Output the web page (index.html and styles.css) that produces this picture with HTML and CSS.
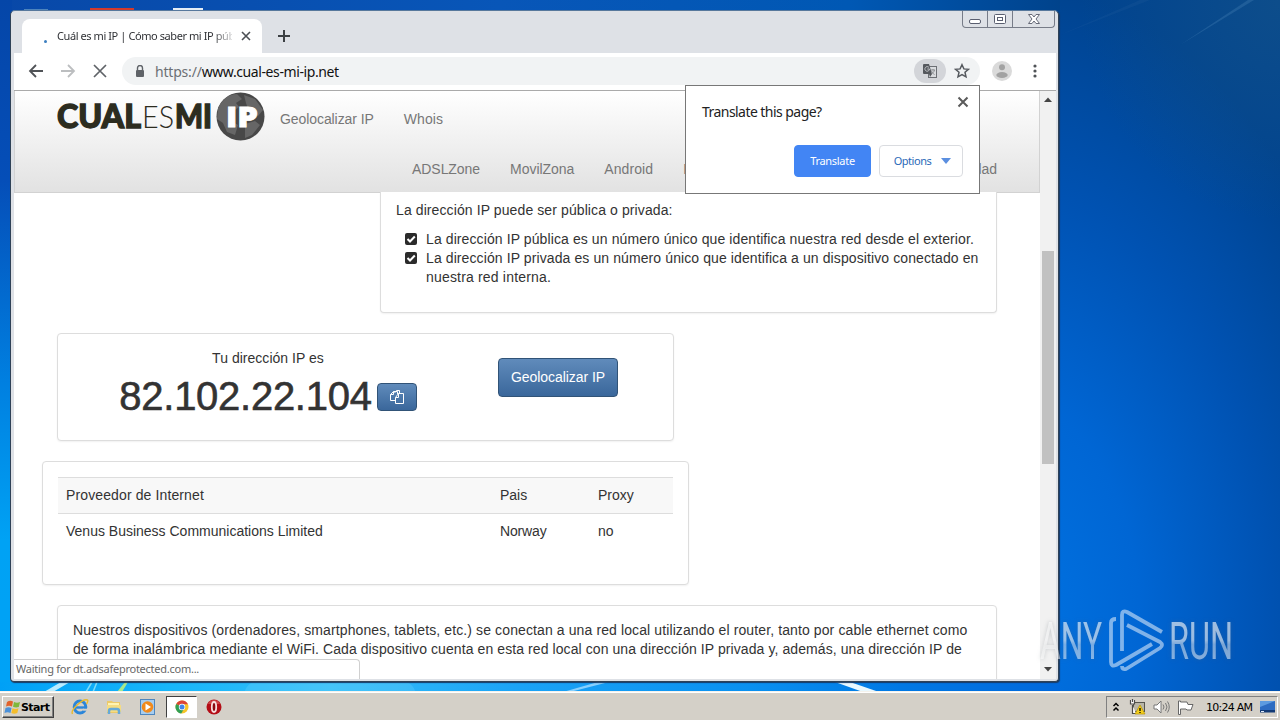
FILE: index.html
```html
<!DOCTYPE html>
<html lang="es">
<head>
<meta charset="utf-8">
<title>Cuál es mi IP</title>
<link rel="stylesheet" href="styles.css">
</head>
<body>
<div class="desktop">
  <svg class="wallpaper" width="1280" height="692" viewBox="0 0 1280 692">
    <rect x="24" y="9" width="24" height="1" fill="#4d84bd"/><rect x="90" y="8" width="44" height="3" fill="#d23a2c"/><rect x="173" y="8" width="30" height="3" fill="#e4edf5"/>
    <path d="M44 692 61 682h9L53 692z" fill="#b9ecff"/>
    <path d="M86 692l6-10M93 692l4-10" stroke="#7edcf8" stroke-width="1.5"/>
    <path d="M117 692l8-10h3l-6 10z" fill="#a8e88b"/>
    <ellipse cx="330" cy="692" rx="85" ry="24" fill="#8ee0ff" opacity=".2"/>
    <path d="M563 692 598 682h11L570 692z" fill="#a5dcff" opacity=".8"/>
    <path d="M835 682h15l29 10h-16z" fill="#e8f8ff"/>
    <path d="M1180 45 1248 0h6z" fill="#5c93c5" opacity=".25"/>
    <path d="M1060 35 1140 0h10z" fill="#4c83b5" opacity=".1"/>
  </svg>

  <div class="window">
    <div class="captions">
      <span class="cap"><svg width="25" height="16"><rect x="6.5" y="8.5" width="11" height="4" rx="1.5" fill="#fff" stroke="#5a5f70"/></svg></span>
      <span class="cap"><svg width="25" height="16"><rect x="6.500" y="3.500" width="11" height="9" rx="1" fill="#fff" stroke="#5a5f70"/><rect x="9.500" y="6.500" width="5" height="3" fill="#fff" stroke="#5a5f70"/></svg></span>
      <span class="cap wide"><svg width="41" height="16"><path d="M15.500 3.500h3.500l2 2.500 2-2.500h3.500l-3.500 4.500 3.500 4.500h-3.500l-2-2.500-2 2.500h-3.500l3.500-4.500z" fill="#fff" stroke="#666a78"/></svg></span>
    </div>
    <div class="tabstrip">
      <div class="tab">
        <i class="spinner"></i>
        <span class="tabtitle">Cuál es mi IP | Cómo saber mi IP púb</span>
        <svg width="10" height="10" viewBox="0 0 10 10"><path d="M1 1l8 8M9 1l-8 8" stroke="#4b4f54" stroke-width="1.6"/></svg>
      </div>
      <svg class="newtab" width="12" height="12"><path d="M6 0v12M0 6h12" stroke="#3c4043" stroke-width="2"/></svg>
    </div>
    <div class="toolbar">
      <svg class="nav1" width="16" height="16"><path d="M15 8H2M8 2 2 8l6 6" fill="none" stroke="#505357" stroke-width="1.8"/></svg>
      <svg class="nav2" width="16" height="16"><path d="M1 8h13M8 2l6 6-6 6" fill="none" stroke="#bcbec0" stroke-width="1.8"/></svg>
      <svg class="nav3" width="14" height="14"><path d="M1 1l12 12M13 1 1 13" stroke="#5f6368" stroke-width="1.7"/></svg>
      <div class="omnibox">
        <svg class="lock" width="10" height="13"><path d="M2.500 5V3a2.500 2.500 0 0 1 5 0v2" fill="none" stroke="#5f6368" stroke-width="1.400"/><rect x="1" y="5" width="8" height="7" rx="1" fill="#5f6368"/></svg>
        <span class="url"><span class="scheme">https://</span>www.cual-es-mi-ip.net</span>
        <span class="trbadge"><svg width="16" height="16" viewBox="0 0 16 16"><rect x="6.500" y="3.500" width="8" height="11" fill="#d9dbde" stroke="#6c6f74"/><path d="M1 2a1 1 0 0 1 1-1h5l3 10H2a1 1 0 0 1-1-1z" fill="#55585d"/><path d="M7 4.500A2.300 2.300 0 1 0 7.500 6H5.300" fill="none" stroke="#c1c4c8"/><path d="M9 7h4M11 6v1M12.500 7c-.4 2-1.600 3-3 4M9.500 8c.6 1.500 1.500 2.500 3 3.500" fill="none" stroke="#8b8e92"/><path d="M7 11h3l-2 3z" fill="#55585d"/></svg></span>
        <svg class="star" width="16" height="16" viewBox="0 0 16 16"><path d="M8 1.700l1.900 4.200 4.500.4-3.400 3 1 4.500L8 11.500l-4 2.300 1-4.500-3.400-3 4.500-.4z" fill="none" stroke="#55595e" stroke-width="1.500"/></svg>
      </div>
      <svg class="avatar" width="20" height="20"><circle cx="10" cy="10" r="10" fill="#dadada"/><circle cx="10" cy="6.200" r="3" fill="#a2a2a2"/><ellipse cx="10" cy="14" rx="5.700" ry="3" fill="#a2a2a2"/></svg>
      <svg class="dots" width="4" height="14"><g fill="#505357"><circle cx="2" cy="2" r="1.600"/><circle cx="2" cy="7" r="1.600"/><circle cx="2" cy="12" r="1.600"/></g></svg>
    </div>

    <div class="view">
      <div class="page">
        <div class="navbar">
          <div class="navrow">
            <svg class="logo" width="210" height="50" viewBox="0 0 210 50">
              <g font-family="Lato" font-size="31.500" fill="#2c2c1f">
                <text class="heavy" x="0" y="36" textLength="84" lengthAdjust="spacingAndGlyphs">CUAL</text>
                <text x="85" y="36" font-weight="300" textLength="32" lengthAdjust="spacingAndGlyphs">ES</text>
                <text class="heavy" x="118" y="36" textLength="37" lengthAdjust="spacingAndGlyphs">MI</text>
              </g>
              <circle cx="183.500" cy="24.500" r="24" fill="#484848"/>
              <path d="M161 16q7-14 19-14l5 5-6 4 3 4-7 5-2 8 8 5-3 10-8-3-4-9-6-4zM187 3l11 4 8 11-5 6-9-4-3-9zM188 32l10-3 5 4-8 10-7 3z" fill="#666"/>
              <text class="iptext" x="169" y="35" textLength="32" lengthAdjust="spacingAndGlyphs">IP</text>
            </svg>
            <span class="geo">Geolocalizar IP</span><span class="whois">Whois</span>
          </div>
          <div class="navlinks"><span class="l1">ADSLZone</span><span class="l2">MovilZona</span><span class="l3">Android</span><span class="l4">Redes</span><span class="last">Movilidad</span></div>
        </div>
        <div class="main">
          <section class="card info">
            <p class="t0">La dirección IP puede ser pública o privada:</p>
            <ul>
              <li><svg width="12" height="12"><rect width="12" height="12" rx="2" fill="#2b2b2b"/><path d="M2.500 6 5 8.500 9.800 3.500" fill="none" stroke="#fff" stroke-width="2"/></svg><span>La dirección IP pública es un número único que identifica nuestra red desde el exterior.</span></li>
              <li><svg width="12" height="12"><rect width="12" height="12" rx="2" fill="#2b2b2b"/><path d="M2.500 6 5 8.500 9.800 3.500" fill="none" stroke="#fff" stroke-width="2"/></svg><span>La dirección IP privada es un número único que identifica a un dispositivo conectado en<br><span class="t3">nuestra red interna.</span></span></li>
            </ul>
          </section>
          <section class="card ipcard">
            <div class="ipcol">
              <p class="t4">Tu dirección IP es</p>
              <div class="iprow"><span class="ip">82.102.22.104</span><span class="btn copy"><svg width="16" height="16" viewBox="0 0 16 16"><path d="M6.500 11.500h-5v-6l3-3h4v2.500M4.500 2.500v3h-3M10.500 4V1.500h-3L5.500 4" fill="none" stroke="#fff"/><path d="M6.500 14.500v-6l3-4h5v10zM9.500 4.500v4h-3" fill="none" stroke="#fff"/></svg></span></div>
            </div>
            <span class="btn geobtn">Geolocalizar IP</span>
          </section>
          <section class="card provider">
            <div class="row head"><span class="h0">Proveedor de Internet</span><span>Pais</span><span>Proxy</span></div>
            <div class="row"><span>Venus Business Communications Limited</span><span class="t6">Norway</span><span>no</span></div>
          </section>
          <section class="card more"><span class="t7">Nuestros dispositivos (ordenadores, smartphones, tablets, etc.) se conectan a una red local utilizando el router, tanto por cable ethernet como</span><br><span class="t8">de forma inalámbrica mediante el WiFi. Cada dispositivo cuenta en esta red local con una dirección IP privada y, además, una dirección IP de</span></section>
        </div>
      </div>
      <div class="scrollbar">
        <svg width="16" height="17"><path d="M4 11h8L8 6.500z" fill="#444"/></svg>
        <i class="thumb"></i>
        <svg width="16" height="17"><path d="M4 5h8l-4 4.500z" fill="#444"/></svg>
      </div>
      <div class="status">Waiting for dt.adsafeprotected.com...</div>
    </div>

    <div class="popup">
      <div class="ptop"><span class="ptitle">Translate this page?</span><svg width="12" height="12"><path d="M1.500 1.500l9 9M10.500 1.500l-9 9" stroke="#5a5a5a" stroke-width="2"/></svg></div>
      <div class="pbtns"><span class="pb blue">Translate</span><span class="pb">Options<svg width="10" height="6"><path d="M0 0h10L5 6z" fill="#5b8fe0"/></svg></span></div>
    </div>
  </div>

  <svg class="watermark" width="230" height="70" viewBox="0 0 230 70">
    <defs>
      <linearGradient id="wg" x1="0" y1="0" x2="0" y2="1"><stop offset="0" stop-color="#fff" stop-opacity=".62"/><stop offset=".48" stop-color="#fff" stop-opacity=".58"/><stop offset=".55" stop-color="#fff" stop-opacity=".45"/><stop offset="1" stop-color="#fff" stop-opacity=".55"/></linearGradient>
    </defs>
    <g class="wmtext" font-size="51" fill="url(#wg)">
      <text x="4" y="53" textLength="62" lengthAdjust="spacingAndGlyphs">ANY</text>
      <text x="133" y="53" textLength="64" lengthAdjust="spacingAndGlyphs">RUN</text>
    </g>
    <path d="M80 13q-5 0-5 4v39q0 5 5 3l36-21M86 45V9q0-5 5-3l35 20M91 19l33 17q4 3 0 6L90 63q-4 1-4-3" fill="none" stroke="#fff" stroke-opacity=".5" stroke-width="3.800" stroke-linejoin="round"/>
  </svg>

  <div class="taskbar">
    <div class="start"><svg width="17" height="16" viewBox="0 0 17 16"><path d="M3 3q3-2 6-.5L8 7.500Q5 6 2 7.500z" fill="#e2622b"/><path d="M10 3q3 1.500 6 0l-1.200 5Q12 9 9 7.800z" fill="#7fb83c"/><path d="M1.500 9q3-1.500 6 0L6.500 14q-3-1.500-6 0z" fill="#4b91d9"/><path d="M8.500 9.300q3 1.500 6 0l-1.200 4.700q-3 1.500-6 0z" fill="#f4bd2c"/></svg>Start</div>
    <svg class="ql" width="18" height="18" viewBox="0 0 18 18"><ellipse cx="9" cy="9" rx="5.800" ry="6" fill="none" stroke="#2b86d9" stroke-width="3"/><path d="M4 9.500h11" stroke="#2b86d9" stroke-width="2.400"/><path d="M12 11.700h5" stroke="#d4d0c8" stroke-width="2"/><path d="M1.500 16C-1 12 12 0 16.500 2q1 1-1 4" fill="none" stroke="#e9b92d" stroke-width="1.400"/></svg>
    <svg class="ql" width="18" height="18" viewBox="0 0 18 18"><path d="M2 3h5l1 1h7v11H2z" fill="#ecc969"/><path d="M3 5h11v4H3z" fill="#fff3b2"/><path d="M2 7h14v7H2z" fill="#f5dc82"/><path d="M4 16v-3q0-2 2-2h6q2 0 2 2v3" fill="none" stroke="#66a9d8" stroke-width="2.500"/></svg>
    <svg class="ql" width="18" height="18" viewBox="0 0 18 18"><rect x="1.500" y="1.500" width="14" height="15" fill="#a6cdf0" stroke="#4e86be"/><circle cx="8.500" cy="9" r="5.800" fill="#f18a1c"/><path d="M6.500 5.500v7l5.500-3.500z" fill="#fff"/></svg>
    <div class="active"><svg width="14" height="14" viewBox="0 0 14 14"><circle cx="7" cy="7" r="6.500" fill="#f6c529"/><path d="M7 7 1.200 4A6.600 6.600 0 0 1 13 4.200H7z" fill="#dc4437"/><path d="M7 7 1.200 4a6.500 6.500 0 0 0 5 9.500l3-5z" fill="#319f55"/><circle cx="7" cy="7" r="3.200" fill="#fff"/><circle cx="7" cy="7" r="2.500" fill="#4285e8"/></svg></div>
    <svg class="opera" width="16" height="16" viewBox="0 0 16 16"><circle cx="8" cy="8" r="7.500" fill="#b40d16"/><path d="M2 5a6.500 6.500 0 0 1 12 0z" fill="#e06565" opacity=".6"/><ellipse cx="8" cy="8" rx="2.200" ry="5" fill="#8a0a10" stroke="#f6dede" stroke-width="1.800"/></svg>
    <div class="tray">
      <svg width="8" height="12"><path d="M1.500 5 4 2.500 6.500 5M1.500 9.500 4 7l2.500 2.500" fill="none" stroke="#000" stroke-width="1.500"/></svg>
      <svg class="net" width="17" height="16"><rect x="4.500" y="3.500" width="11" height="9" fill="#b9b6a8" stroke="#55554f"/><path d="M1.500 1v4h4V1M3.500 0v3M3.500 6v8.500H7" fill="#fff" stroke="#4b4b4b" stroke-width="1.200"/><path d="M11 6l5 9H6z" fill="#f4ce1c" stroke="#b79400" stroke-width=".7"/><path d="M11 9v3M11 13v1" stroke="#000" stroke-width="1.300"/></svg>
      <svg class="vol" width="17" height="14"><path d="M1 5h3l4-4v12L4 9H1z" fill="#fff" stroke="#777"/><path d="M10 4.500q2 2.500 0 5M12.500 3q3 4 0 8M14.500 1.500q3.500 5.500 0 11" fill="none" stroke="#777"/></svg>
      <svg class="flag" width="17" height="15"><path d="M1.500 1v13.500h2V9H9l1 1h4l2-5.500h-5L10 2H3.500V1z" fill="#fff" stroke="#666"/></svg>
      <span class="clock">10:24 AM</span>
      <svg width="15" height="12"><rect width="15" height="10" fill="#2d6cc2"/><path d="M0 0h15L0 6z" fill="#5d9be0"/><rect y="9" width="15" height="2.500" fill="#123a76"/><path d="M1 10.500h3" stroke="#dbe9fa"/></svg>
    </div>
  </div>
</div>
</body>
</html>
```
FILE: styles.css
```css
* { box-sizing: border-box; }
body { margin: 0; font-family: "Liberation Sans", Arial, sans-serif; }
p, ul { margin: 0; padding: 0; }
svg { display: block; flex: none; }
.desktop {
  position: relative; width: 1280px; height: 720px; overflow: hidden;
  background:
    linear-gradient(90deg, #00a0f6 0, #18b6fa 170px, #35bdf8 330px, #1ba3f6 520px, #0a90f0 750px, #0078e4 900px, #0068dc 1060px) 0 682px / 1060px 10px no-repeat,
    linear-gradient(180deg, #0546a8 0, #054eb8 180px, #007fe0 380px, #00a2f4 540px, #00a2f6 682px) 0 0 / 12px 682px no-repeat,
    linear-gradient(90deg, #0848a8 0, #0856b8 500px, #0058b4 850px, #00438c 1060px) 0 0 / 1060px 11px no-repeat,
    radial-gradient(ellipse 200px 220px at 1280px 0, rgba(22,84,136,.6), rgba(10,70,130,0)),
    radial-gradient(ellipse 400px 640px at 1000px 620px, #0074e4 0, #0066d4 35%, #0052b2 68%, #00438f 100%);
}
.wallpaper { position: absolute; left: 0; top: 0; }
.window {
  position: absolute; left: 10px; top: 10px; width: 1049px; height: 672px;
  border: 1px solid #2f4257; border-top-color: #57789c; border-radius: 5px 5px 4px 4px;
  background: #dee1e6; padding: 0 2px 3px 3px; box-shadow: 1px 1px 1px #183a66;
}
.captions { position: absolute; right: 3px; top: 0; display: flex; height: 17px; border: 1px solid #777c88; border-top: 0; border-radius: 0 0 4px 4px; }
.cap { width: 25px; border-right: 1px solid #777c88; }
.cap.wide { width: 41px; border: 0; }
.tabstrip { height: 42px; display: flex; align-items: center; padding: 8px 0 0 8px; }
.tab { width: 240px; height: 34px; background: #fff; border-radius: 8px 8px 0 0; display: flex; align-items: center; padding-left: 22px; font: 11px "Noto Sans", sans-serif; color: #303236; }
.spinner { width: 3px; height: 3px; border-radius: 50%; background: #3c7fc0; margin: 10px 10px 0 0; }
.tabtitle { width: 175px; margin: 0 9px 2px 0; white-space: nowrap; letter-spacing: -.42px; -webkit-mask-image: linear-gradient(90deg, #000 155px, transparent 180px); }
.newtab { margin: 0 0 1px 16px; }
.toolbar { height: 37px; background: #fff; display: flex; align-items: center; padding-left: 14px; padding-bottom: 1px; }
.nav2 { margin-left: 16px; }
.nav3 { margin-left: 17px; }
.omnibox { width: 858px; height: 28px; margin-left: 15px; border-radius: 14px; background: #f1f3f4; display: flex; align-items: center; padding-left: 13px; }
.url { margin-left: 10px; width: 759px; font: 14px "Noto Sans", sans-serif; letter-spacing: -.4px; color: #111; white-space: nowrap; }
.scheme { color: #6c7075; letter-spacing: -.2px; }
.trbadge { width: 32px; height: 24px; border-radius: 12px; background: #d3d5d9; display: flex; align-items: center; justify-content: center; }
.star { margin-left: 8px; }
.avatar { margin-left: 12px; }
.dots { margin-left: 21px; }
.view { position: relative; height: 589px; border-top: 1px solid #aaa; background: #fff; display: flex; overflow: hidden; }
.page { position: relative; width: 1026px; height: 588px; overflow: hidden; font-size: 14px; line-height: 19px; color: #333; letter-spacing: .1px; }
.navbar { height: 102px; border: 1px solid #d2d2d2; border-top: 0; background: linear-gradient(#fff, #e2e2e2); color: #777; white-space: nowrap; padding-left: 42px; letter-spacing: 0; }
.navrow { display: flex; height: 53px; align-items: center; padding-top: 3px; }
.logo { margin-bottom: 5px; }
.heavy { font-weight: 900; stroke: #2c2c1f; stroke-width: 1.3px; }
.iptext { font: 800 28px "Open Sans", sans-serif; fill: #fff; stroke: #fff; stroke-width: .8px; }
.geo { margin-left: 13px; margin-right: 30px; letter-spacing: -.08px; }
.whois { letter-spacing: .1px; }
.navlinks { display: flex; padding: 16px 42px 0 355px; }
.l1, .l2, .l3 { margin-right: 30px; }
.l1, .l2 { letter-spacing: -.05px; }
.l3 { letter-spacing: .1px; }
.last { margin-left: auto; }
.main { padding: 0 43px; display: flex; flex-direction: column; }
.card { border: 1px solid #ddd; border-radius: 4px; box-shadow: 0 1px 2px rgba(0,0,0,.06); background: #fff; white-space: nowrap; }
.info { margin-left: 323px; height: 121px; margin-top: -1px; padding: 9px 15px; border-top: 0; border-radius: 0 0 4px 4px; }
.info ul { margin-top: 10px; padding-left: 9px; }
.info li { display: flex; gap: 9px; list-style: none; }
.info li svg { margin-top: 3px; }
.t3 { letter-spacing: .18px; }
.ipcard { margin-top: 20px; width: 617px; height: 108px; display: flex; }
.ipcol { width: 420px; padding-top: 15px; text-align: center; }
.t4 { letter-spacing: .03px; }
.iprow { display: flex; justify-content: center; align-items: center; height: 62px; gap: 5px; padding-bottom: 7px; }
.ip { font-size: 40px; line-height: 48px; letter-spacing: -.27px; margin-top: 1px; -webkit-text-stroke: .6px #333; }
.btn { border: 1px solid #315377; border-radius: 4px; background: linear-gradient(#608bbb, #3a679b); color: #fff; display: flex; align-items: center; justify-content: center; }
.copy { width: 40px; height: 28px; margin-top: 3px; }
.geobtn { width: 120px; height: 39px; margin: 24px 0 0 20px; letter-spacing: -.05px; }
.provider { margin: 20px 0 0 -15px; width: 647px; height: 124px; padding: 15px; letter-spacing: 0; }
.row { display: grid; grid-template-columns: 434px 98px 1fr; height: 34px; padding-left: 8px; align-items: center; }
.head { height: 37px; background: #f8f8f8; border-top: 1px solid #ddd; border-bottom: 1px solid #ddd; }
.h0 { letter-spacing: .12px; }
.t6 { letter-spacing: -.15px; }
.more { margin-top: 20px; height: 120px; padding: 15px; }
.t7 { letter-spacing: .11px; }
.t8 { letter-spacing: .085px; }
.scrollbar { width: 16px; background: #f1f1f1; display: flex; flex-direction: column; align-items: center; }
.thumb { width: 12px; height: 213px; background: #c1c1c1; margin: 143px 0 198px; }
.status { position: absolute; left: 0; bottom: 0; width: 346px; height: 20px; border: 1px solid #d0d0d0; border-left: 0; border-bottom: 0; border-radius: 0 4px 0 0; background: #fff; padding: 0 2px; font: 11px/17px "Noto Sans", sans-serif; letter-spacing: -.25px; color: #666; }
.popup { position: absolute; left: 674px; top: 74px; width: 295px; height: 109px; background: #fff; border: 1px solid #777; padding: 10px 16px; font-family: "Noto Sans", sans-serif; }
.ptop { display: flex; justify-content: space-between; height: 49px; margin-right: -6px; }
.ptitle { font-size: 14px; line-height: 32px; letter-spacing: -.55px; color: #222; }
.pbtns { display: flex; gap: 8px; justify-content: flex-end; }
.pb { width: 84px; height: 32px; border: 1px solid #dadce0; border-radius: 4px; display: flex; align-items: center; justify-content: center; gap: 10px; padding: 0 0 1px 3px; font-size: 11px; letter-spacing: -.45px; color: #2b69b8; }
.pb.blue { width: 77px; background: #4285f4; border-color: #4285f4; color: #fff; letter-spacing: -.3px; padding-left: 0; }
.watermark { position: absolute; left: 1036px; top: 606px; font-family: "Liberation Sans Narrow", "Roboto", sans-serif; }
.wmtext { filter: drop-shadow(0 0 2px rgba(90,100,110,.5)); }
.taskbar { position: absolute; left: 0; top: 691px; width: 1280px; height: 29px; background: #d4d0c8; border-top: 1px solid #f4f2ec; box-shadow: inset 0 1px #fff; display: flex; align-items: center; padding: 2px 2px 0; }
.start { width: 52px; height: 22px; border: 1px solid; border-color: #fff #404040 #404040 #fff; box-shadow: inset -1px -1px #808080; display: flex; align-items: center; gap: 0; font: bold 11px "DejaVu Sans", sans-serif; letter-spacing: -.6px; padding-left: 1px; color: #000; }
.ql { margin-left: 16px; }
.start + .ql { margin-left: 17px; }
.active { width: 31px; height: 22px; margin-left: 9px; background: #fff; border: 1px solid; border-color: #404040 #fff #fff #404040; display: flex; align-items: center; justify-content: center; }
.opera { margin-left: 9px; }
.tray { margin-left: auto; width: 172px; height: 22px; border: 1px solid; border-color: #808080 #fff #fff #808080; display: flex; align-items: center; padding-left: 5px; }
.net { margin-left: 9px; }
.vol { margin-left: 7px; }
.flag { margin-left: 7px; }
.clock { width: 54px; margin-left: 12px; font: 11px "DejaVu Sans", sans-serif; letter-spacing: -.75px; color: #000; white-space: nowrap; }
```
